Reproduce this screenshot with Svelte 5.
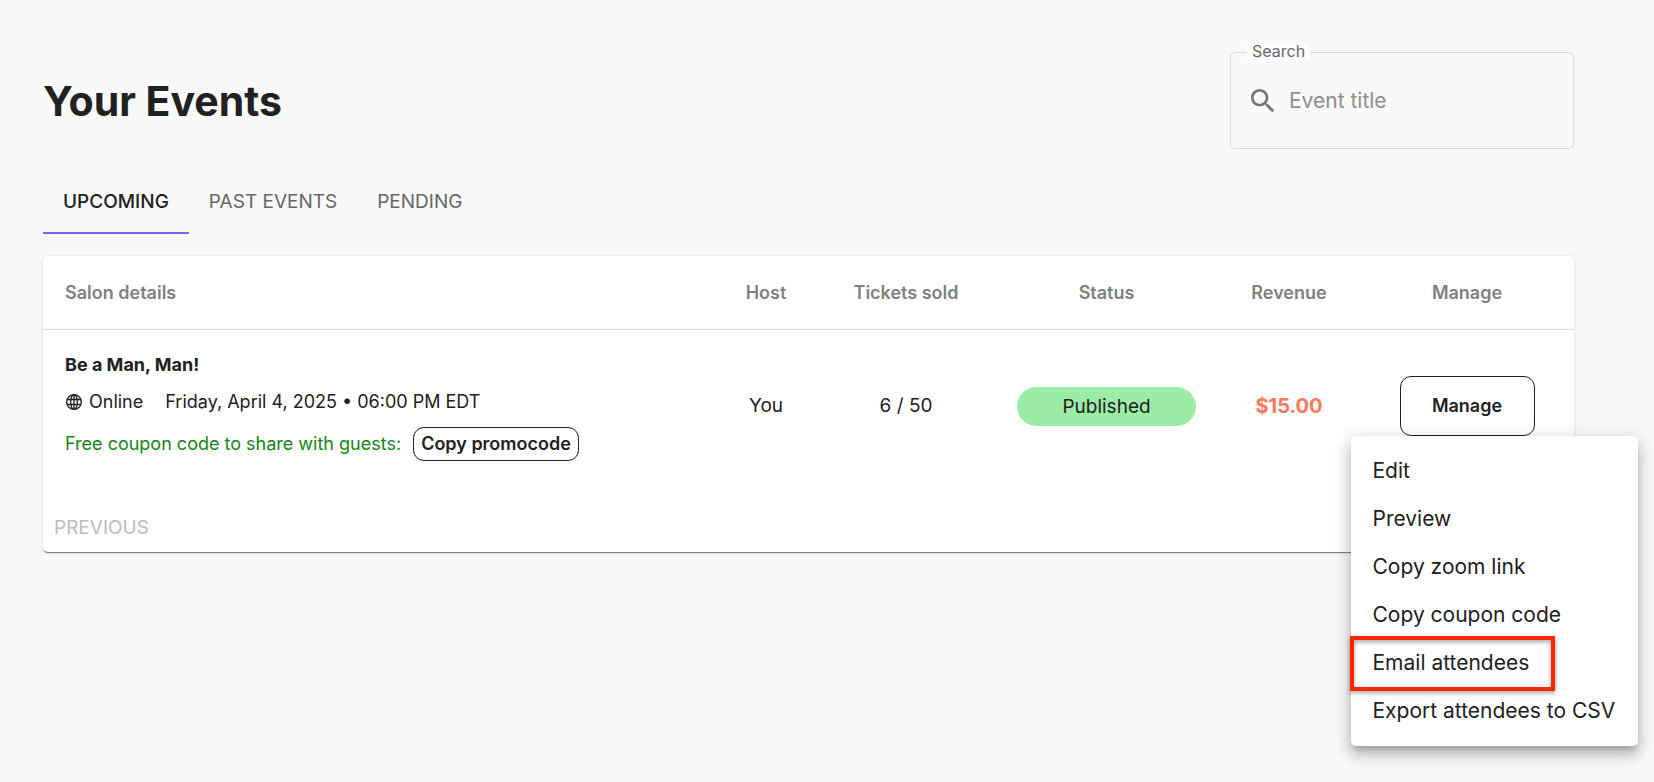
<script lang="ts">
	const tabs = ['Upcoming', 'Past events', 'Pending'];
	const actions = [
		'Edit',
		'Preview',
		'Copy zoom link',
		'Copy coupon code',
		'Email attendees',
		'Export attendees to CSV'
	];
	const events = [
		{
			title: 'Be a Man, Man!',
			place: 'Online',
			date: 'Friday, April 4, 2025 • 06:00 PM EDT',
			host: 'You',
			tickets: '6 / 50',
			status: 'Published',
			revenue: '$15.00'
		}
	];

	let activeTab = $state('Upcoming');
	let highlighted = $state('Email attendees');
	let menuOpen = $state(true);
	let search = $state('');
</script>

<main>
	<header>
		<h1>Your Events</h1>
		<div class="search">
			<label for="search">Search</label>
			<svg viewBox="0 0 24 24" aria-hidden="true">
				<path
					d="M15.5 14h-.79l-.28-.27C15.41 12.59 16 11.11 16 9.5 16 5.91 13.09 3 9.5 3S3 5.91 3 9.5 5.91 16 9.5 16c1.61 0 3.09-.59 4.23-1.57l.27.28v.79l5 4.99L20.49 19l-4.99-5zm-6 0C7.01 14 5 11.99 5 9.5S7.01 5 9.5 5 14 7.01 14 9.5 11.99 14 9.5 14z"
				/>
			</svg>
			<input id="search" type="text" placeholder="Event title" bind:value={search} />
		</div>
	</header>

	<nav>
		{#each tabs as tab}
			<button class:active={tab === activeTab} onclick={() => (activeTab = tab)}>{tab}</button>
		{/each}
	</nav>

	<section class="card">
		<table>
			<colgroup>
				<col />
				<col class="host" />
				<col class="tickets" />
				<col class="status" />
				<col class="revenue" />
				<col class="manage" />
			</colgroup>
			<thead>
				<tr>
					<th>Salon details</th>
					<th>Host</th>
					<th>Tickets sold</th>
					<th>Status</th>
					<th>Revenue</th>
					<th>Manage</th>
				</tr>
			</thead>
			<tbody>
				{#each events as event}
					<tr>
						<td>
							<div class="details">
								<strong>{event.title}</strong>
								<div class="when">
									<svg viewBox="0 0 16 16" aria-hidden="true">
										<circle cx="8" cy="8" r="6.5" />
										<ellipse cx="8" cy="8" rx="3" ry="6.5" />
										<path d="M8 1.5v13M1.8 5.8h12.4M1.8 10.2h12.4" />
									</svg>
									<span class="place">{event.place}</span>
									<span>{event.date}</span>
								</div>
								<div class="coupon">
									<span>Free coupon code to share with guests:</span>
									<button>Copy promocode</button>
								</div>
							</div>
						</td>
						<td>{event.host}</td>
						<td>{event.tickets}</td>
						<td><span class="pill">{event.status}</span></td>
						<td class="amount">{event.revenue}</td>
						<td>
							<div class="anchor">
								<button class="manage-button" onclick={() => (menuOpen = !menuOpen)}>Manage</button>
								{#if menuOpen}
									<div class="menu">
										{#each actions as action}
											<button
												class:highlighted={action === highlighted}
												onclick={() => (highlighted = action)}
											>
												{action}
											</button>
										{/each}
									</div>
								{/if}
							</div>
						</td>
					</tr>
				{/each}
			</tbody>
		</table>
		<footer>
			<button disabled>Previous</button>
		</footer>
	</section>
</main>

<style>
	:global(body) {
		background: #f9f9f9;
	}

	main {
		box-sizing: border-box;
		min-height: 100vh;
		padding: 52px 80px 52px 43px;
		color: #212121;
		font-family: Inter, 'Liberation Sans', sans-serif;
		font-size: 19px;
		line-height: 24px;
	}

	button,
	input {
		margin: 0;
		padding: 0;
		border: 0;
		background: none;
		color: inherit;
		font: inherit;
		cursor: pointer;
	}

	header {
		display: flex;
		justify-content: space-between;
		align-items: center;
	}

	h1 {
		margin: 0;
		font-size: 41px;
		line-height: 56px;
		font-weight: 700;
	}

	.search {
		position: relative;
		display: flex;
		align-items: center;
		gap: 10px;
		box-sizing: border-box;
		width: 344px;
		height: 97px;
		padding: 0 16px;
		border: 1px solid #dddddd;
		border-radius: 5px;
	}

	.search label {
		position: absolute;
		top: -10px;
		left: 16px;
		padding: 0 5px;
		background: #fff;
		color: #666;
		font-size: 16px;
		line-height: 16px;
	}

	.search svg {
		flex: none;
		width: 32px;
		height: 32px;
		fill: #757575;
	}

	.search input {
		flex: 1;
		min-width: 0;
		outline: none;
		font-size: 21px;
		line-height: 28px;
		cursor: text;
	}

	.search input::placeholder {
		color: #8e8e8e;
		opacity: 1;
	}

	nav {
		display: flex;
		margin: 20px 0 22px;
	}

	nav button {
		height: 65px;
		padding: 2px 20px 0;
		border-bottom: 2px solid transparent;
		color: #666;
		text-transform: uppercase;
	}

	nav .active {
		border-color: #7b61ff;
		color: #212121;
		font-weight: 500;
	}

	.card {
		border-radius: 5px;
		background: #fff;
		box-shadow:
			0 2px 1px -1px rgba(0, 0, 0, 0.4),
			0 1px 1px rgba(0, 0, 0, 0.14),
			0 1px 4px rgba(0, 0, 0, 0.12);
	}

	table {
		width: 100%;
		table-layout: fixed;
		border-collapse: collapse;
	}

	.host {
		width: 102px;
	}

	.tickets {
		width: 178px;
	}

	.status {
		width: 223px;
	}

	.revenue {
		width: 142px;
	}

	.manage {
		width: 214px;
	}

	th {
		height: 73px;
		padding: 0;
		border-bottom: 1px solid #dddddd;
		color: #808080;
		font-size: 18px;
		font-weight: 600;
	}

	td {
		height: 152px;
		padding: 0;
		text-align: center;
	}

	th:first-child,
	td:first-child {
		padding-left: 22px;
		text-align: left;
	}

	.details {
		display: flex;
		flex-direction: column;
		gap: 12px;
		padding-top: 2px;
		font-size: 18px;
	}

	.when,
	.coupon {
		display: flex;
		align-items: center;
	}

	.when {
		line-height: 26px;
	}

	.when svg {
		width: 18px;
		height: 18px;
		margin-right: 6px;
		fill: none;
		stroke: #212121;
		stroke-width: 1.2;
	}

	.place {
		margin-right: 22px;
	}

	.coupon {
		gap: 12px;
		color: #118811;
	}

	.coupon button {
		height: 34px;
		padding: 0 7px;
		border: 1px solid #212121;
		border-radius: 11px;
		color: #212121;
		font-weight: 600;
	}

	.pill {
		display: block;
		margin: 0 22px;
		border-radius: 20px;
		background: #9beda5;
		line-height: 39px;
	}

	.amount {
		color: #ff7759;
		font-size: 20px;
		font-weight: 700;
	}

	.anchor {
		position: relative;
		display: inline-block;
		vertical-align: middle;
	}

	.manage-button {
		display: block;
		width: 135px;
		height: 60px;
		border: 1px solid #212121;
		border-radius: 11px;
		font-size: 18px;
		font-weight: 600;
	}

	.menu {
		position: absolute;
		top: 100%;
		right: -103px;
		width: 287px;
		padding: 11px 0;
		border-radius: 5px;
		background: #fff;
		box-shadow:
			0 6px 6px -3px rgba(0, 0, 0, 0.2),
			0 10px 14px 1px rgba(0, 0, 0, 0.14),
			0 4px 18px 3px rgba(0, 0, 0, 0.12);
	}

	.menu button {
		display: flex;
		align-items: center;
		width: 100%;
		height: 48px;
		padding: 0 22px;
		font-size: 21px;
		white-space: nowrap;
	}

	.menu .highlighted {
		position: relative;
	}

	.highlighted::after {
		content: '';
		position: absolute;
		inset: -3px 83px -4px -1px;
		border: 4px solid #ff2600;
		filter: drop-shadow(0 2px 2px rgba(0, 0, 0, 0.4));
	}

	footer {
		display: flex;
		padding: 34px 11px 12px;
	}

	footer button {
		color: #bdbdbd;
		text-transform: uppercase;
	}
</style>
